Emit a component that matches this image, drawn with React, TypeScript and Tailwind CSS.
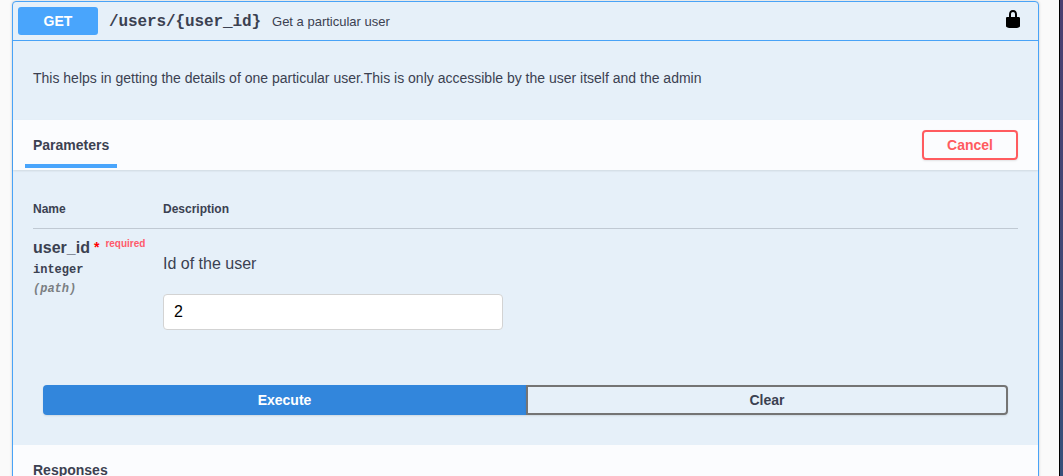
import { useState } from "react";

function LockIcon() {
  return (
    <svg className="mt-[7px] size-5 self-start" viewBox="0 0 20 20" fill="#000" aria-hidden="true">
      <path d="M15.8 8H14V5.6C14 2.703 12.665 1 10 1 7.334 1 6 2.703 6 5.6V8H4c-.553 0-1 .646-1 1.199V17c0 .549.428 1.139.951 1.307l1.197.387C5.672 18.861 6.55 19 7.1 19h5.8c.549 0 1.428-.139 1.951-.307l1.196-.387c.524-.167.953-.757.953-1.306V9.199C17 8.646 16.352 8 15.8 8zM12 8H8V5.199C8 3.754 8.797 3 10 3c1.203 0 2 .754 2 2.199V8z" />
    </svg>
  );
}

function Summary() {
  return (
    <header className="box-content flex h-[38px] items-center rounded-t-[3px] border-b border-[#49a3f7] pr-[15px] pl-[5px]">
      <span className="flex h-7 w-20 items-center justify-center rounded-[3px] bg-[#49a5fc] text-sm font-bold text-white">
        GET
      </span>
      <span className="ml-[11px] pt-[2px] font-['Liberation_Mono',monospace] text-base font-bold tracking-[-0.1px]">
        /users/{"{user_id}"}
      </span>
      <span className="ml-[11px] flex-1 pt-px text-[13px]">Get a particular user</span>
      <LockIcon />
    </header>
  );
}

function Parameters() {
  const [userId, setUserId] = useState("2");
  return (
    <div className="px-5 pt-[31px]">
      <div className="flex h-7 border-b border-[#c0c9d3] text-xs leading-4 font-bold">
        <span className="w-[130px]">Name</span>
        <span>Description</span>
      </div>
      <div className="flex">
        <div className="w-[130px] shrink-0 pt-[9px]">
          <div className="flex h-5 text-base leading-5 font-bold">
            <span>user_id</span>
            <span className="ml-1 text-sm leading-[18px] text-[#ff0000]">*</span>
            <span className="ml-1.5 text-[10px] leading-3 text-[#ff5b6b]">required</span>
          </div>
          <div className="pt-1 font-['Liberation_Mono',monospace] text-xs leading-4 font-bold">
            integer
          </div>
          <div className="pt-[3px] font-['Liberation_Mono',monospace] text-xs leading-4 font-bold text-[#7b7f83] italic">
            (path)
          </div>
        </div>
        <div className="pt-[25px]">
          <p className="text-base leading-5">Id of the user</p>
          <input
            className="mt-5 block h-9 w-[340px] rounded-[4px] border border-[#d3d3d3] bg-white px-[10px] text-base text-black outline-none"
            value={userId}
            onChange={(e) => setUserId(e.target.value)}
          />
        </div>
      </div>
    </div>
  );
}

export default function App() {
  return (
    <div className="flex h-[476px] w-[1063px] overflow-hidden bg-[#fafafa] font-['Liberation_Sans',Arial,sans-serif] text-[#3b4151]">
      <main className="flex-1 pt-px pl-3">
        <section className="h-[520px] w-[1027px] rounded-[4px] border border-[#49a3f7] bg-[#e6f0f9] shadow-[0_0_3px_rgba(0,0,0,0.19)]">
          <Summary />
          <p className="h-[79px] px-5 pt-[27px] text-sm leading-5">
            This helps in getting the details of one particular user.This is only accessible by the user itself and the admin
          </p>
          <div className="flex h-[50px] items-center bg-[#fbfcfe] pr-5 pl-3 shadow-[0_1px_2px_rgba(0,0,0,0.1)]">
            <div className="mt-[2px] h-12 flex-1">
              <h4 className="h-[46px] w-[92px] border-b-4 border-[#49a5fc] px-2 pt-[13px] text-sm leading-5 font-bold">
                Parameters
              </h4>
            </div>
            <button className="h-[30px] w-24 rounded-[4px] border-2 border-[#ff5b5f] text-sm font-bold text-[#ff5b5f] shadow-[0_1px_2px_rgba(0,0,0,0.1)]">
              Cancel
            </button>
          </div>
          <div className="h-[215px]">
            <Parameters />
          </div>
          <div className="flex h-[60px] items-start px-[30px] text-sm font-bold">
            <button className="h-[30px] w-[483px] rounded-l-[4px] bg-[#3286dc] text-white shadow-[0_1px_2px_rgba(0,0,0,0.1)]">
              Execute
            </button>
            <button className="h-[30px] flex-1 rounded-r-[4px] border-2 border-[#747474] shadow-[0_1px_2px_rgba(0,0,0,0.1)]">
              Clear
            </button>
          </div>
          <div className="h-[50px] bg-[#fbfcfe] px-5 pt-[15px] text-sm leading-5 font-bold">Responses</div>
        </section>
      </main>
      <div className="w-1 border-l border-black bg-linear-to-b from-[#4a3f70] to-[#36507a]" />
    </div>
  );
}
